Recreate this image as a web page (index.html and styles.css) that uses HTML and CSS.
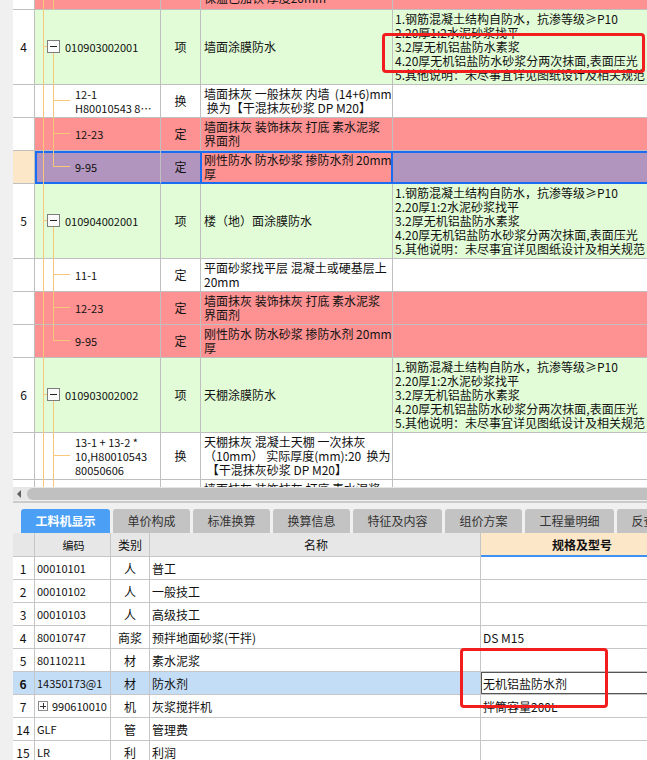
FILE: index.html
```html
<!DOCTYPE html>
<html lang="zh-CN">
<head>
<meta charset="utf-8">
<title>工料机显示</title>
<link rel="stylesheet" href="styles.css">
</head>
<body>
<div class="app">
  <div class="tg">
    <div class="tg-body">
      <div class="tr pink h33">
        <div class="tc num"></div>
        <div class="tc code child"><i class="ln-a"></i><i class="ln-b"></i><i class="ln-h"></i><span>12-24</span></div>
        <div class="tc type">定</div>
        <div class="tc name at-top0"><span>墙面抹灰 装饰抹灰 打底 素水泥浆<br>保温已加铁 厚度20mm</span></div>
        <div class="tc feat"></div>
      </div>
      <div class="tr green h75">
        <div class="tc num">4</div>
        <div class="tc code item"><i class="ln-a"></i><i class="ln-h0"></i><i class="box"></i><i class="ln-b down"></i><span>010903002001</span></div>
        <div class="tc type">项</div>
        <div class="tc name"><span>墙面涂膜防水</span></div>
        <div class="tc feat"><span>1.钢筋混凝土结构自防水，抗渗等级≥P10<br>2.20厚1:2水泥砂浆找平<br>3.2厚无机铝盐防水素浆<br>4.20厚无机铝盐防水砂浆分两次抹面,表面压光<br>5.其他说明：未尽事宜详见图纸设计及相关规范</span></div>
      </div>
      <div class="tr white h33">
        <div class="tc num"></div>
        <div class="tc code child"><i class="ln-a"></i><i class="ln-b"></i><i class="ln-h"></i><span>12-1<br>H80010543 8…</span></div>
        <div class="tc type">换</div>
        <div class="tc name"><span>墙面抹灰 一般抹灰 内墙 &nbsp;(14+6)mm<br>&nbsp;换为【干混抹灰砂浆 DP M20】</span></div>
        <div class="tc feat"></div>
      </div>
      <div class="tr pink h33">
        <div class="tc num"></div>
        <div class="tc code child"><i class="ln-a"></i><i class="ln-b"></i><i class="ln-h"></i><span>12-23</span></div>
        <div class="tc type">定</div>
        <div class="tc name"><span>墙面抹灰 装饰抹灰 打底 素水泥浆<br>界面剂</span></div>
        <div class="tc feat"></div>
      </div>
      <div class="tr sel h33">
        <div class="tc num"></div>
        <div class="tc code child"><i class="ln-a"></i><i class="ln-b last"></i><i class="ln-h"></i><span>9-95</span></div>
        <div class="tc type">定</div>
        <div class="tc name"><span>刚性防水 防水砂浆 掺防水剂 20mm<br>厚</span></div>
        <div class="tc feat"></div>
      </div>
      <div class="tr green h75">
        <div class="tc num">5</div>
        <div class="tc code item"><i class="ln-a"></i><i class="ln-h0"></i><i class="box"></i><i class="ln-b down"></i><span>010904002001</span></div>
        <div class="tc type">项</div>
        <div class="tc name"><span>楼（地）面涂膜防水</span></div>
        <div class="tc feat"><span>1.钢筋混凝土结构自防水，抗渗等级≥P10<br>2.20厚1:2水泥砂浆找平<br>3.2厚无机铝盐防水素浆<br>4.20厚无机铝盐防水砂浆分两次抹面,表面压光<br>5.其他说明：未尽事宜详见图纸设计及相关规范</span></div>
      </div>
      <div class="tr white h33">
        <div class="tc num"></div>
        <div class="tc code child"><i class="ln-a"></i><i class="ln-b"></i><i class="ln-h"></i><span>11-1</span></div>
        <div class="tc type">定</div>
        <div class="tc name"><span>平面砂浆找平层 混凝土或硬基层上<br>20mm</span></div>
        <div class="tc feat"></div>
      </div>
      <div class="tr pink h33">
        <div class="tc num"></div>
        <div class="tc code child"><i class="ln-a"></i><i class="ln-b"></i><i class="ln-h"></i><span>12-23</span></div>
        <div class="tc type">定</div>
        <div class="tc name"><span>墙面抹灰 装饰抹灰 打底 素水泥浆<br>界面剂</span></div>
        <div class="tc feat"></div>
      </div>
      <div class="tr pink h33">
        <div class="tc num"></div>
        <div class="tc code child"><i class="ln-a"></i><i class="ln-b last"></i><i class="ln-h"></i><span>9-95</span></div>
        <div class="tc type">定</div>
        <div class="tc name"><span>刚性防水 防水砂浆 掺防水剂 20mm<br>厚</span></div>
        <div class="tc feat"></div>
      </div>
      <div class="tr green h75">
        <div class="tc num">6</div>
        <div class="tc code item"><i class="ln-a"></i><i class="ln-h0"></i><i class="box"></i><i class="ln-b down"></i><span>010903002002</span></div>
        <div class="tc type">项</div>
        <div class="tc name"><span>天棚涂膜防水</span></div>
        <div class="tc feat"><span>1.钢筋混凝土结构自防水，抗渗等级≥P10<br>2.20厚1:2水泥砂浆找平<br>3.2厚无机铝盐防水素浆<br>4.20厚无机铝盐防水砂浆分两次抹面,表面压光<br>5.其他说明：未尽事宜详见图纸设计及相关规范</span></div>
      </div>
      <div class="tr white h47">
        <div class="tc num"></div>
        <div class="tc code child"><i class="ln-a"></i><i class="ln-b"></i><i class="ln-h"></i><span>13-1 + 13-2 *<br>10,H80010543<br>80050606</span></div>
        <div class="tc type">换</div>
        <div class="tc name"><span>天棚抹灰 混凝土天棚 一次抹灰<br>（10mm） 实际厚度(mm):20 &nbsp;换为<br>&nbsp;【干混抹灰砂浆 DP M20】</span></div>
        <div class="tc feat"></div>
      </div>
      <div class="tr white h33">
        <div class="tc num"></div>
        <div class="tc code child"><i class="ln-a"></i><i class="ln-b"></i><i class="ln-h"></i><span>12-23</span></div>
        <div class="tc type">定</div>
        <div class="tc name at-top"><span>墙面抹灰 装饰抹灰 打底 素水泥浆<br>界面剂</span></div>
        <div class="tc feat"></div>
      </div>
    </div>
  </div>

  <div class="hscroll"><i class="arrow"></i><div class="thumb"></div></div>

  <div class="panel">
    <div class="sep"></div>
    <div class="tabs">
      <div class="tab active">工料机显示</div>
      <div class="tab">单价构成</div>
      <div class="tab">标准换算</div>
      <div class="tab">换算信息</div>
      <div class="tab">特征及内容</div>
      <div class="tab">组价方案</div>
      <div class="tab">工程量明细</div>
      <div class="tab">反查图形工程量</div>
    </div>
    <div class="bg">
      <div class="br head">
        <div class="bc b-num"></div>
        <div class="bc b-code ctr">编码</div>
        <div class="bc b-type">类别</div>
        <div class="bc b-name ctr">名称</div>
        <div class="bc b-spec spec-head">规格及型号</div>
      </div>
      <div class="br">
        <div class="bc b-num">1</div><div class="bc b-code">00010101</div><div class="bc b-type">人</div><div class="bc b-name">普工</div><div class="bc b-spec"></div>
      </div>
      <div class="br">
        <div class="bc b-num">2</div><div class="bc b-code">00010102</div><div class="bc b-type">人</div><div class="bc b-name">一般技工</div><div class="bc b-spec"></div>
      </div>
      <div class="br">
        <div class="bc b-num">3</div><div class="bc b-code">00010103</div><div class="bc b-type">人</div><div class="bc b-name">高级技工</div><div class="bc b-spec"></div>
      </div>
      <div class="br">
        <div class="bc b-num">4</div><div class="bc b-code">80010747</div><div class="bc b-type">商浆</div><div class="bc b-name">预拌地面砂浆(干拌)</div><div class="bc b-spec">DS M15</div>
      </div>
      <div class="br">
        <div class="bc b-num">5</div><div class="bc b-code">80110211</div><div class="bc b-type">材</div><div class="bc b-name">素水泥浆</div><div class="bc b-spec"></div>
      </div>
      <div class="br bsel">
        <div class="bc b-num">6</div><div class="bc b-code">14350173@1</div><div class="bc b-type">材</div><div class="bc b-name">防水剂</div><div class="bc b-spec editing">无机铝盐防水剂</div>
      </div>
      <div class="br">
        <div class="bc b-num">7</div><div class="bc b-code"><i class="plus"></i>990610010</div><div class="bc b-type">机</div><div class="bc b-name">灰浆搅拌机</div><div class="bc b-spec">拌筒容量200L</div>
      </div>
      <div class="br">
        <div class="bc b-num">14</div><div class="bc b-code">GLF</div><div class="bc b-type">管</div><div class="bc b-name">管理费</div><div class="bc b-spec"></div>
      </div>
      <div class="br">
        <div class="bc b-num">15</div><div class="bc b-code">LR</div><div class="bc b-type">利</div><div class="bc b-name">利润</div><div class="bc b-spec"></div>
      </div>
    </div>
  </div>

  <div class="mark mark-1"></div>
  <div class="mark mark-2"></div>
</div>
</body>
</html>
```

FILE: styles.css
```css
* { box-sizing: border-box; }

body {
  margin: 0;
  background: #f0f0f0;
  font-family: "Noto Sans CJK SC", "Noto Sans", sans-serif;
  font-size: 12px;
  color: #111;
}

.app {
  position: relative;
  width: 647px;
  height: 760px;
  overflow: hidden;
  background: #f0f0f0;
}

/* ---------- top grid ---------- */
.tg {
  height: 487px;
  overflow: hidden;
  padding-left: 13px;
}
.tg-body { margin-top: -23px; }

.tr { display: flex; width: 700px; }
.h33 { height: 33px; }
.h47 { height: 47px; }
.h75 { height: 75px; }

.tc {
  flex: none;
  display: flex;
  align-items: center;
  border-right: 1px solid #bfbfbf;
  border-bottom: 1px solid #bfbfbf;
  line-height: 14px;
  white-space: nowrap;
  overflow: hidden;
}
.tc.at-top { align-items: flex-start; padding-top: 2px; }
.tc.at-top0 { align-items: flex-start; padding-top: 0; }

.num { width: 22px; justify-content: center; background: #fff; }
.code { width: 126px; position: relative; font-size: 11px; overflow: visible; }
.type { width: 40px; justify-content: center; }
.name { width: 192px; padding-left: 3px; }
.feat { width: 320px; padding-left: 2px; border-right: none; }

.code.item { padding-left: 30px; }
.code.child { padding-left: 40px; }

.green .code, .green .type, .green .name, .green .feat { background: #e1fcd6; }
.pink .code, .pink .type, .pink .name, .pink .feat { background: #fe9191; }
.white .code, .white .type, .white .name, .white .feat { background: #fff; }

/* tree connectors */
.ln-a, .ln-b, .ln-h, .ln-h0 {
  position: absolute;
  background: #f9c77a;
}
.ln-a { left: 8px; top: 0; bottom: -1px; width: 1px; }
.ln-b { left: 18px; top: 0; bottom: -1px; width: 1px; }
.ln-b.last { bottom: auto; height: calc(50% - 1px); }
.ln-b.down { top: calc(50% + 6px); }
.ln-h { left: 18px; top: calc(50% - 1px); width: 17px; height: 1px; }
.ln-h0 { left: 8px; top: calc(50% - 1px); width: 4px; height: 1px; }
.box {
  position: absolute;
  left: 12px;
  top: calc(50% - 7px);
  width: 13px;
  height: 13px;
  border: 1px solid #7d7d7d;
  background: #fafafa;
}
.box::after {
  content: "";
  position: absolute;
  left: 2px;
  right: 2px;
  top: 5px;
  height: 1px;
  background: #222;
}

/* selected row */
.tr.sel .tc {
  background: #b195be;
  border-bottom-color: #1a6cf2;
  box-shadow: inset 0 2px #1a6cf2, inset 0 -1px #1a6cf2;
}
.tr.sel .num {
  background: #fde7c9;
  border-bottom-color: #bfbfbf;
  box-shadow: none;
}
.tr.sel .code { box-shadow: inset 0 2px #1a6cf2, inset 0 -1px #1a6cf2, inset 2px 0 #1a6cf2; }
.tr.sel .type { border-right-color: #1a6cf2; }
.tr.sel .name {
  background: #fe9191;
  border-right-color: #1a6cf2;
  box-shadow: inset 0 2px #1a6cf2, inset 0 -1px #1a6cf2, inset 1px 0 #1a6cf2, inset -1px 0 #1a6cf2;
}

/* ---------- horizontal scrollbar ---------- */
.hscroll {
  margin-left: 13px;
  height: 13px;
  background: #e6e6e6;
  display: flex;
  align-items: center;
}
.arrow {
  width: 0;
  height: 0;
  margin-left: 4px;
  border-top: 4px solid transparent;
  border-bottom: 4px solid transparent;
  border-right: 4px solid #5f5f5f;
}
.thumb {
  flex: 1;
  margin-left: 6px;
  height: 12px;
  background: #c0c0c0;
  border-radius: 6px 0 0 6px;
}

/* ---------- bottom panel ---------- */
.sep {
  margin: 1px 0 0 13px;
  height: 2px;
  background: #cbcbcb;
}
.tabs {
  display: flex;
  gap: 3px;
  margin-top: 6px;
  padding-left: 21px;
  height: 24px;
  white-space: nowrap;
}
.tab {
  flex: none;
  height: 24px;
  line-height: 24px;
  padding: 0 14.5px;
  background: #c3c3c3;
  color: #333;
  border-radius: 3px 3px 0 0;
  font-size: 12px;
}
.tab.active {
  background: #4b9ff4;
  color: #fff;
  font-weight: bold;
}

.bg { padding-left: 13px; }
.br { display: flex; height: 23px; width: 700px; }
.br.head { height: 24px; }
.bc {
  flex: none;
  display: flex;
  align-items: center;
  border-right: 1px solid #c6c6c6;
  border-bottom: 1px solid #c6c6c6;
  background: #fff;
  white-space: nowrap;
  overflow: hidden;
  padding-left: 2px;
}
.head .bc { background: #e7e7e7; }
.b-num { width: 22px; justify-content: center; padding-left: 0; padding-right: 1px; }
.b-code { width: 76px; font-size: 11px; }
.b-type { width: 39px; justify-content: center; padding-left: 0; }
.b-name { width: 331px; }
.b-spec { width: 201px; }
.ctr { justify-content: center; }
.head .spec-head {
  justify-content: center;
  background: #fde7c9;
  font-weight: bold;
  border-bottom: 2px solid #3f90f0;
}
.bsel .bc { background: #c4ddf7; }
.bsel .b-num { font-weight: bold; }
.bsel .editing {
  background: #fff;
  box-shadow: inset 0 0 0 1px #555;
}
.plus {
  position: relative;
  flex: none;
  width: 10px;
  height: 10px;
  border: 1px solid #8a8a8a;
  margin: 0 4px 0 1px;
}
.plus::before, .plus::after {
  content: "";
  position: absolute;
  background: #333;
}
.plus::before { left: 1px; right: 1px; top: 3.5px; height: 1px; }
.plus::after { top: 1px; bottom: 1px; left: 3.5px; width: 1px; }

/* ---------- annotation marks ---------- */
.mark {
  position: absolute;
  border: 3px solid #f21d1d;
  border-radius: 4px;
}
.mark-1 { left: 382px; top: 33px; width: 263px; height: 40px; }
.mark-2 { left: 460px; top: 648px; width: 148px; height: 60px; }
```
